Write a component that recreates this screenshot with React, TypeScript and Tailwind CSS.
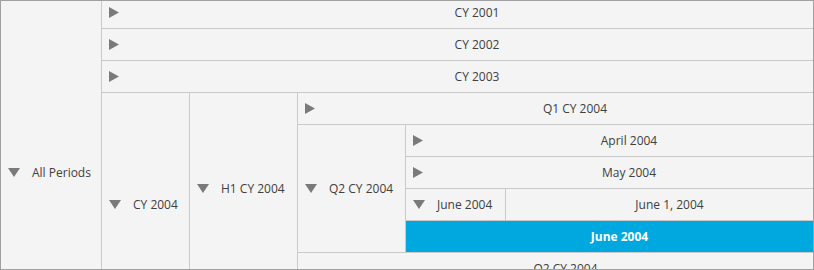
import React from "react";

const RightArrow = () => (
  <svg width="10" height="11" viewBox="0 0 10 11" className="ml-[7px] shrink-0">
    <polygon points="0,0 10,5.5 0,11" fill="#7a7a7a" />
  </svg>
);

const DownArrow = () => (
  <svg width="12" height="9" viewBox="0 0 12 9" className="shrink-0">
    <polygon points="0,0 12,0 6,9" fill="#7a7a7a" />
  </svg>
);

// one header row, 31px + 1px line
const Row = ({ label, collapsed, selected }: { label?: string; collapsed?: boolean; selected?: boolean }) => (
  <div
    className={
      "h-8 border-b border-[#c9c9c9] flex items-center " +
      (selected ? "bg-[#00a8e0] text-white font-bold" : "")
    }
  >
    {collapsed && <RightArrow />}
    {label && <span className={"flex-1 text-center " + (collapsed ? "pl-[22px]" : "pl-[20px]")}>{label}</span>}
  </div>
);

// expanded member: label cell on the left, children stacked on the right
const Block = ({ label, width, children }: { label: string; width: string; children: React.ReactNode }) => (
  <div className="flex">
    <div className={width + " shrink-0 border-r border-b border-[#c9c9c9] flex items-center gap-3 pl-[7px]"}>
      <DownArrow />
      <span>{label}</span>
    </div>
    <div className="flex-1 flex flex-col">{children}</div>
  </div>
);

export default function App() {
  return (
    <div
      className="w-[814px] h-[270px] overflow-hidden border border-[#a0a0a0] bg-[#f4f4f4] text-[12px] text-[#404040] leading-none"
      style={{ fontFamily: '"Open Sans", "Noto Sans", sans-serif' }}
    >
      {/* grid is scrolled 4px down */}
      <div className="-mt-1">
        <Block label="All Periods" width="w-[101px]">
          <Row label="CY 2001" collapsed />
          <Row label="CY 2002" collapsed />
          <Row label="CY 2003" collapsed />
          <Block label="CY 2004" width="w-[88px]">
            <Block label="H1 CY 2004" width="w-[108px]">
              <Row label="Q1 CY 2004" collapsed />
              <Block label="Q2 CY 2004" width="w-[108px]">
                <Row label="April 2004" collapsed />
                <Row label="May 2004" collapsed />
                <Block label="June 2004" width="w-[100px]">
                  <Row label="June 1, 2004" />
                </Block>
                <Row label="June 2004" selected />
              </Block>
              <Row label="Q2 CY 2004" />
            </Block>
            {/* rows below the visible area */}
            <Row />
          </Block>
          <Row />
        </Block>
      </div>
    </div>
  );
}
